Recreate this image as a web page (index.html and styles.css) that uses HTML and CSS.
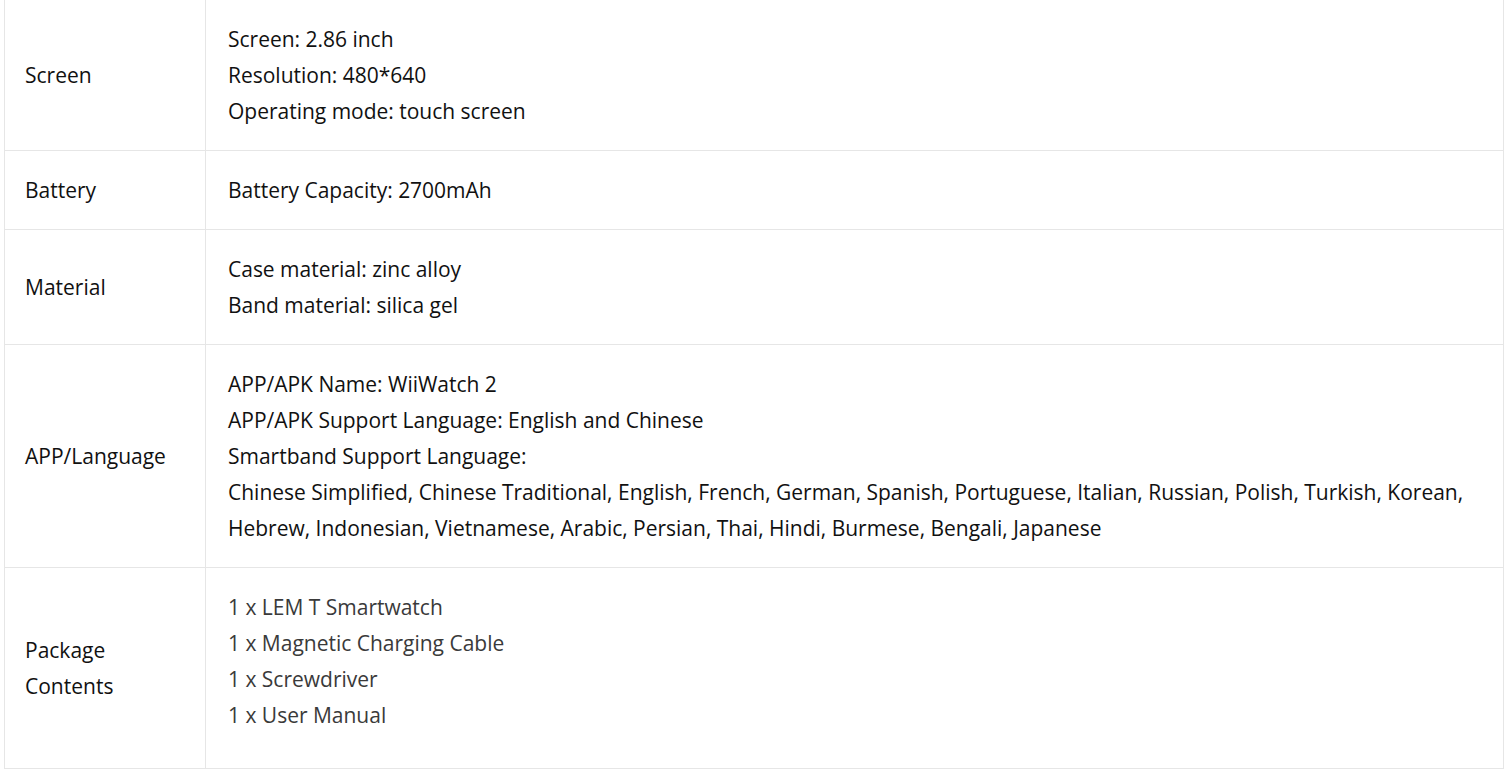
FILE: index.html
```html
<!DOCTYPE html>
<html lang="en">
<head>
<meta charset="utf-8">
<title>Specifications</title>
<link rel="stylesheet" href="styles.css">
</head>
<body>
<table class="spec">
  <tbody>
    <tr>
      <td class="label">Screen</td>
      <td class="value">Screen: 2.86 inch<br>Resolution: 480*640<br>Operating mode: touch screen</td>
    </tr>
    <tr>
      <td class="label">Battery</td>
      <td class="value">Battery Capacity: 2700mAh</td>
    </tr>
    <tr>
      <td class="label">Material</td>
      <td class="value">Case material: zinc alloy<br>Band material: silica gel</td>
    </tr>
    <tr>
      <td class="label">APP/Language</td>
      <td class="value">APP/APK Name: WiiWatch 2<br>APP/APK Support Language: English and Chinese<br>Smartband Support Language:<br>Chinese Simplified, Chinese Traditional, English, French, German, Spanish, Portuguese, Italian, Russian, Polish, Turkish, Korean, Hebrew, Indonesian, Vietnamese, Arabic, Persian, Thai, Hindi, Burmese, Bengali, Japanese</td>
    </tr>
    <tr>
      <td class="label">Package<br>Contents</td>
      <td class="value package">1 x LEM T Smartwatch<br>1 x Magnetic Charging Cable<br>1 x Screwdriver<br>1 x User Manual</td>
    </tr>
  </tbody>
</table>
</body>
</html>
```
FILE: styles.css
```css
html, body {
  margin: 0;
  padding: 0;
  background: #ffffff;
}

body {
  padding: 0 4px;
  font-family: "Open Sans", "Noto Sans", sans-serif;
  font-size: 21px;
  line-height: 36px;
  color: #111111;
}

.spec {
  width: 1500px;
  margin-top: -1px;
  border-collapse: collapse;
  table-layout: fixed;
}

.spec td {
  border: 1px solid #e6e6e6;
  padding: 21px 21px;
  vertical-align: middle;
}

.spec .label {
  width: 159px;
  padding-left: 20px;
}

.spec .value {
  padding-left: 22px;
  letter-spacing: -0.01px;
}

.spec .package {
  color: #3a3a3a;
  padding-bottom: 35px;
}
```
